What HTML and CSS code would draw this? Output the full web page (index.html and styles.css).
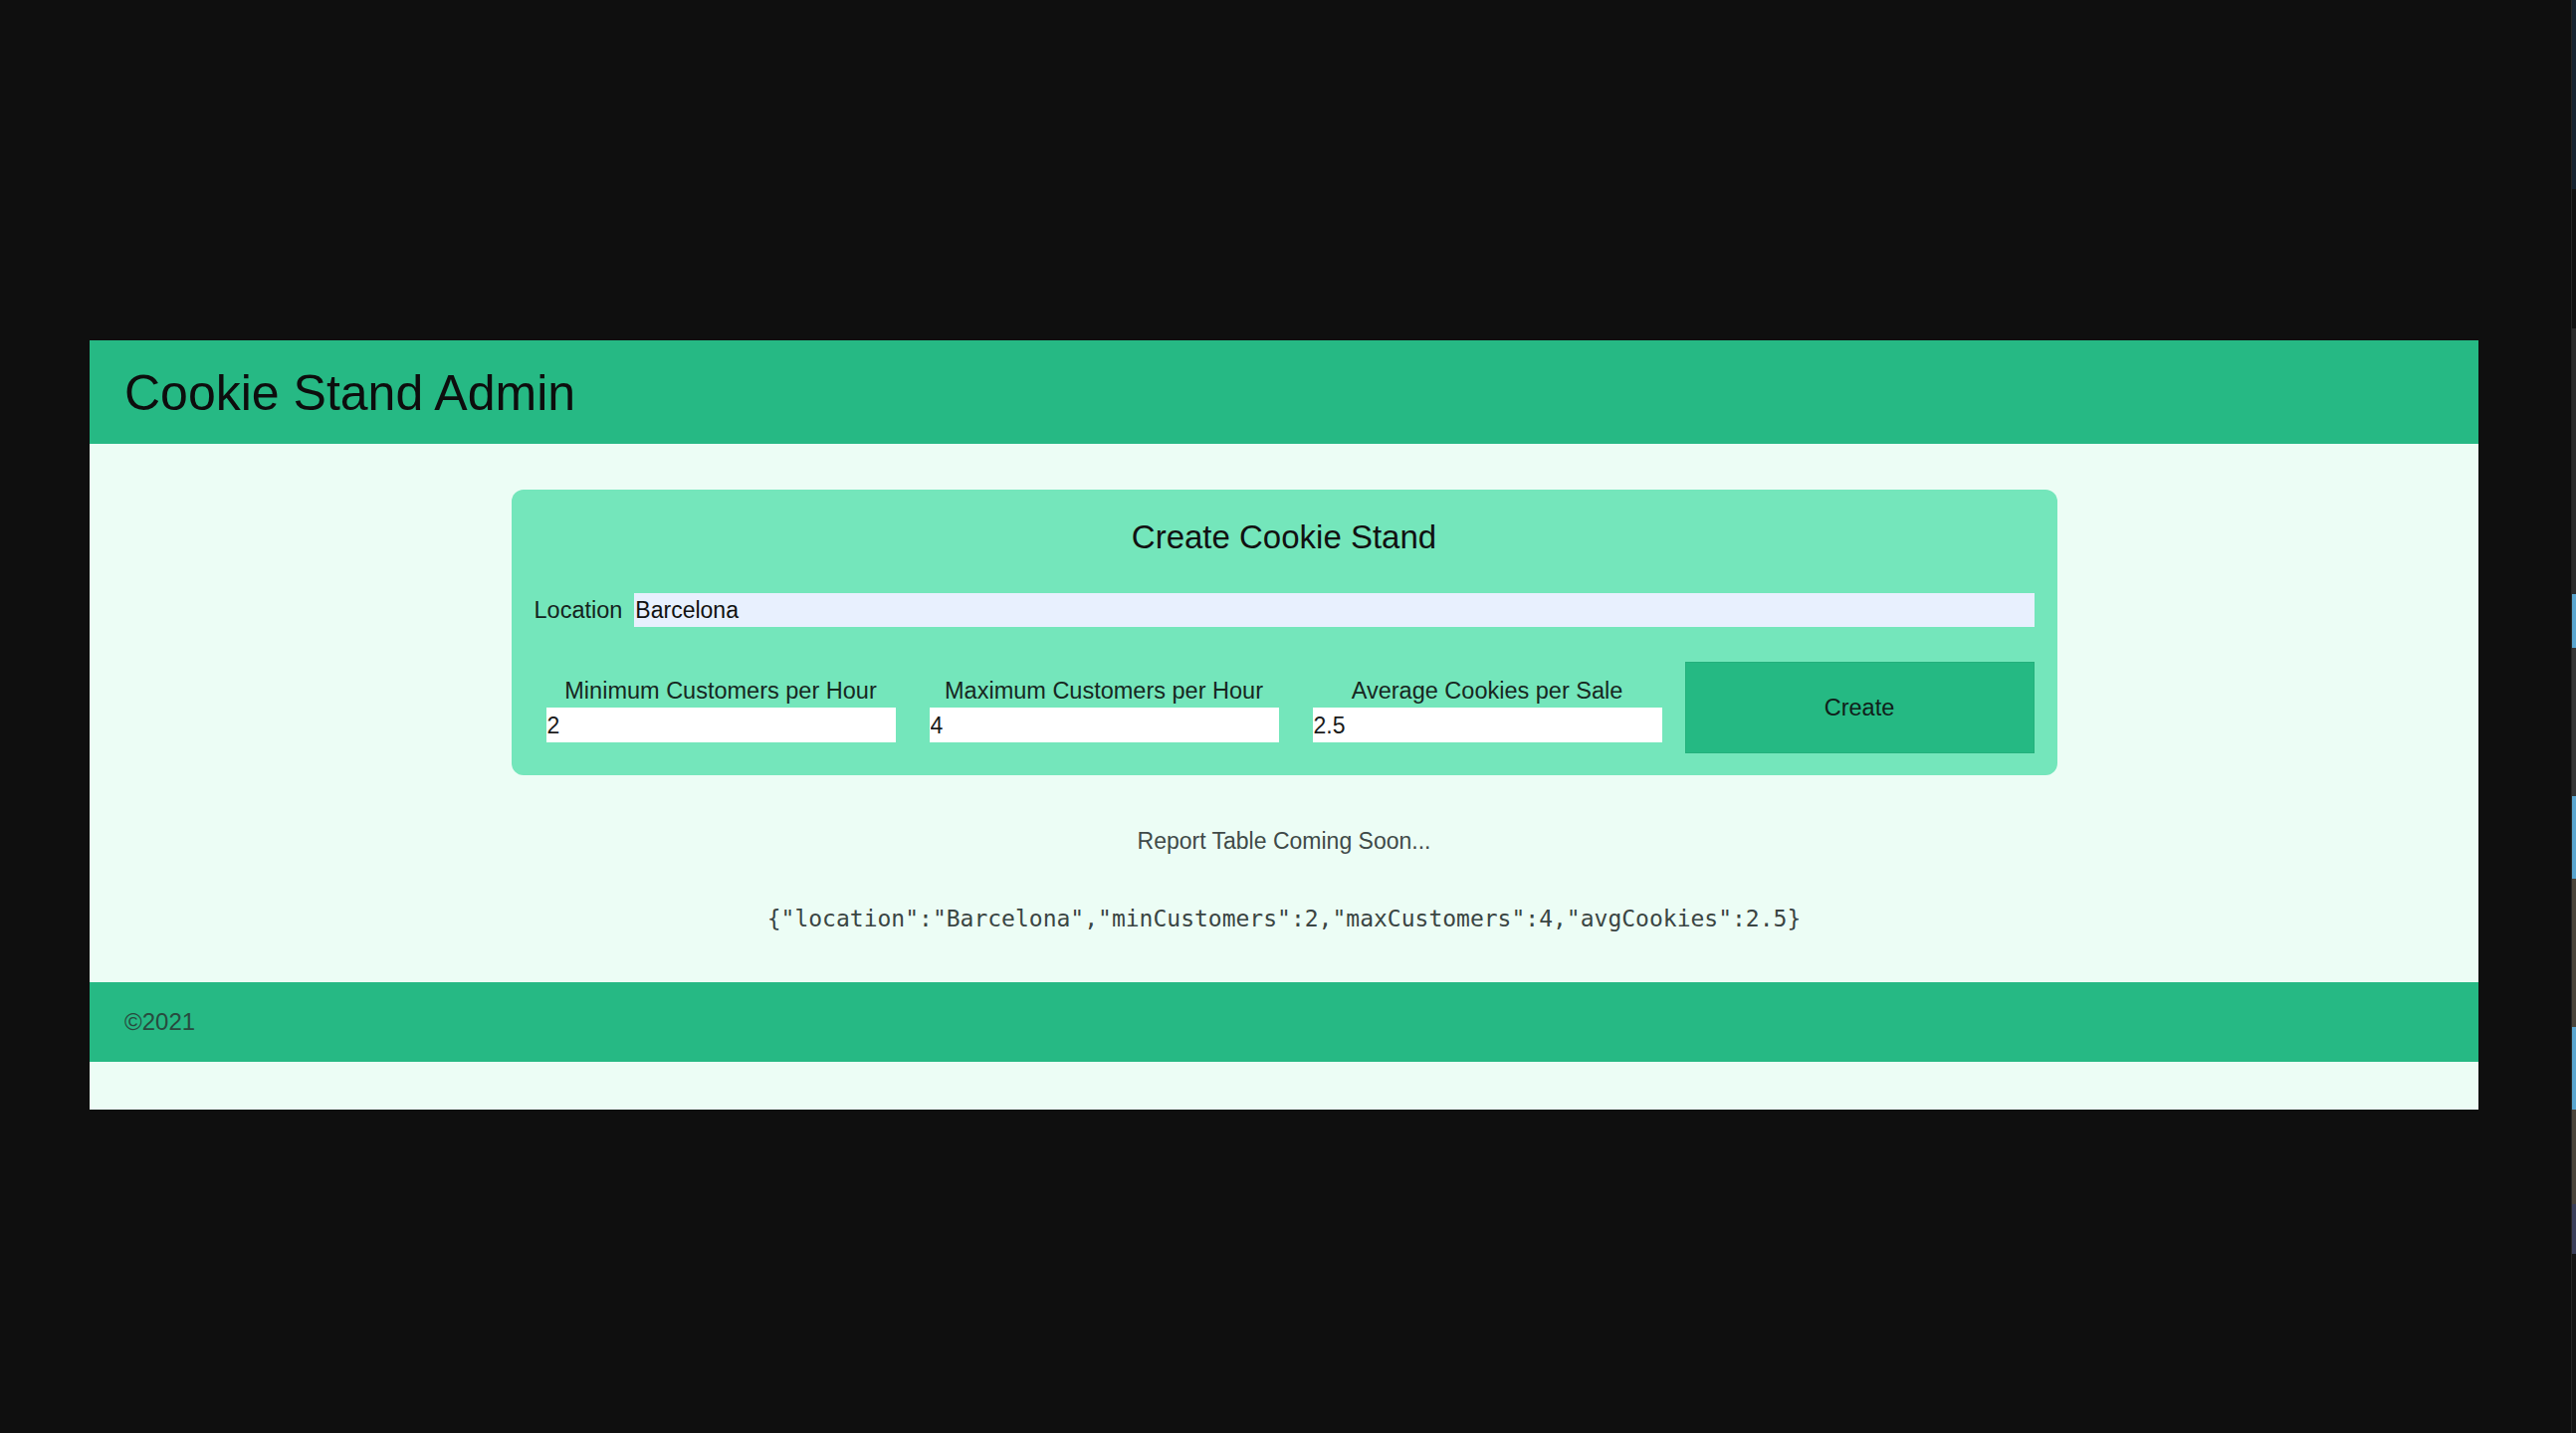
FILE: index.html
```html
<!DOCTYPE html>
<html lang="en">
<head>
<meta charset="utf-8">
<title>Cookie Stand Admin</title>
<link rel="stylesheet" href="styles.css">
</head>
<body>
<div class="desktop">
  <div class="stage">
    <div class="app">
      <header class="app-header">
        <h1 class="app-title">Cookie Stand Admin</h1>
      </header>
      <main class="app-main">
        <form class="stand-form">
          <h2 class="form-title">Create Cookie Stand</h2>
          <div class="location-row">
            <label class="location-label" for="location">Location</label>
            <input class="location-input" id="location" type="text" value="Barcelona">
          </div>
          <div class="numbers-row">
            <div class="fields">
              <div class="field">
                <label class="field-label" for="min">Minimum Customers per Hour</label>
                <input class="field-input" id="min" type="text" value="2">
              </div>
              <div class="field">
                <label class="field-label" for="max">Maximum Customers per Hour</label>
                <input class="field-input" id="max" type="text" value="4">
              </div>
              <div class="field">
                <label class="field-label" for="avg">Average Cookies per Sale</label>
                <input class="field-input" id="avg" type="text" value="2.5">
              </div>
            </div>
            <button class="create-button" type="button">Create</button>
          </div>
        </form>
        <p class="report-note">Report Table Coming Soon...</p>
        <p class="json-output">{"location":"Barcelona","minCustomers":2,"maxCustomers":4,"avgCookies":2.5}</p>
      </main>
      <footer class="app-footer">©2021</footer>
    </div>
  </div>
  <div class="side-strip">
    <div class="strip-seg seg-navy"></div>
    <div class="strip-seg seg-dark"></div>
    <div class="strip-seg seg-grey"></div>
    <div class="strip-seg seg-blue seg-b1"></div>
    <div class="strip-seg seg-grey2"></div>
    <div class="strip-seg seg-blue seg-b2"></div>
    <div class="strip-seg seg-brown"></div>
    <div class="strip-seg seg-blue seg-b3"></div>
    <div class="strip-seg seg-brown2"></div>
    <div class="strip-seg seg-violet"></div>
    <div class="strip-seg seg-end"></div>
  </div>
</div>
</body>
</html>
```

FILE: styles.css
```css
* {
  box-sizing: border-box;
}

html,
body {
  margin: 0;
  padding: 0;
}

body {
  width: 2588px;
  height: 1440px;
  overflow: hidden;
  background: #0f0f0f;
  font-family: "Liberation Sans", Arial, sans-serif;
  color: #111;
}

.desktop {
  display: flex;
  height: 1440px;
}

.stage {
  flex: 1;
  padding: 342px 0 0 90px;
}

.app {
  width: 2400px;
  background: #ecfdf5;
  display: flex;
  flex-direction: column;
  padding-bottom: 48px;
}

.app-header {
  background: #26b984;
  padding: 23px 35px 21px;
}

.app-title {
  margin: 0;
  font-size: 50px;
  line-height: 60px;
  font-weight: 400;
  color: #0d0d0d;
}

.app-main {
  display: flex;
  flex-direction: column;
  align-items: center;
  padding-top: 46px;
}

.stand-form {
  width: 1553px;
  margin: 0;
  padding: 28px 23px 22px;
  border-radius: 12px;
  background: #74e6bb;
}

.form-title {
  margin: 0;
  font-size: 33px;
  line-height: 40px;
  font-weight: 400;
  text-align: center;
  color: #111;
}

.location-row {
  margin-top: 36px;
  display: flex;
  align-items: center;
  gap: 12px;
}

.location-label {
  font-size: 23.5px;
  line-height: 28px;
  color: #14231d;
}

.location-input {
  flex: 1;
  height: 34px;
  border: none;
  outline: none;
  background: #e8f0fe;
  padding: 1px 1px 0;
  font-family: "Liberation Sans", Arial, sans-serif;
  font-size: 23px;
  color: #111;
}

.numbers-row {
  margin-top: 35px;
  display: flex;
  align-items: center;
  gap: 23px;
  padding-left: 12px;
}

.fields {
  display: flex;
  gap: 34px;
  padding-top: 3px;
}

.field {
  width: 351px;
  display: flex;
  flex-direction: column;
  align-items: center;
}

.field-label {
  font-size: 23.5px;
  line-height: 28px;
  margin-bottom: 3px;
  color: #17271f;
  white-space: nowrap;
}

.field-input {
  width: 100%;
  height: 35px;
  border: none;
  outline: none;
  background: #ffffff;
  padding: 2px 1px 0;
  font-family: "Liberation Sans", Arial, sans-serif;
  font-size: 23px;
  color: #1a1a1a;
}

.create-button {
  width: 352px;
  height: 92px;
  background: #25b983;
  border: 1px solid #23b07c;
  font-family: "Liberation Sans", Arial, sans-serif;
  font-size: 23.5px;
  color: #10201a;
  padding: 0;
}

.report-note {
  margin: 50px 0 0;
  font-size: 23px;
  line-height: 32px;
  color: #3f4a48;
  text-align: center;
}

.json-output {
  margin: 46px 0 0;
  font-family: "DejaVu Sans Mono", "Liberation Mono", monospace;
  font-size: 23px;
  line-height: 32px;
  color: #3a4543;
  text-align: center;
}

.app-footer {
  margin-top: 48px;
  height: 80px;
  background: #26b984;
  padding-left: 35px;
  display: flex;
  align-items: center;
  font-size: 24px;
  color: #284a3e;
}

.side-strip {
  width: 5px;
  height: 1440px;
  border-left: 1px solid #262626;
  display: flex;
  flex-direction: column;
}

.strip-seg {
  width: 100%;
}

.seg-navy { height: 190px; background: #172330; }
.seg-dark { height: 140px; background: #121212; }
.seg-grey { height: 267px; background: #2c2c2c; }
.seg-blue { background: #5aa5cf; }
.seg-b1 { height: 54px; }
.seg-grey2 { height: 149px; background: #353535; }
.seg-b2 { height: 83px; }
.seg-brown { height: 149px; background: #4a443b; }
.seg-b3 { height: 83px; }
.seg-brown2 { height: 95px; background: #4a443b; }
.seg-violet { height: 50px; background: #3a3f5a; }
.seg-end { flex: 1; background: #151515; }
```
